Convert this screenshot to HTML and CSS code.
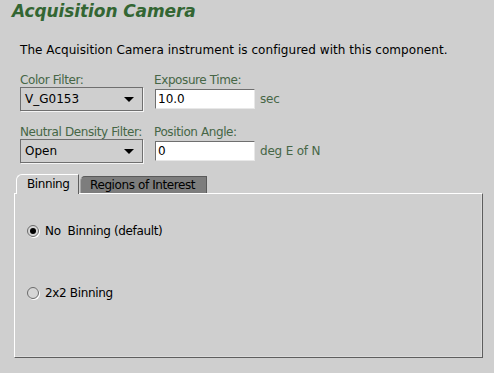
FILE: index.html
```html
<!DOCTYPE html>
<html>
<head>
<meta charset="utf-8">
<link rel="stylesheet" href="styles.css">
</head>
<body>
<h1 class="title">Acquisition Camera</h1>
<p class="desc">The Acquisition Camera instrument is configured with this component.</p>
<div class="form">
  <div class="label">Color Filter:</div>
  <div class="label span2">Exposure Time:</div>
  <div class="combo"><span>V_G0153</span><span class="arrow"></span></div>
  <div class="field">10.0</div>
  <div class="unit">sec</div>

  <div class="label row2">Neutral Density Filter:</div>
  <div class="label span2 row2">Position Angle:</div>
  <div class="combo"><span>Open</span><span class="arrow"></span></div>
  <div class="field">0</div>
  <div class="unit">deg E of N</div>
</div>
<div class="tabs">
  <div class="tab active">Binning</div>
  <div class="tab inactive">Regions of Interest</div>
</div>
<div class="panel">
  <div class="radio-row first"><span class="radio on"></span><span>No&nbsp; Binning (default)</span></div>
  <div class="radio-row second"><span class="radio"></span><span>2x2 Binning</span></div>
</div>
</body>
</html>
```
FILE: styles.css
```css
html, body {
  margin: 0;
  padding: 0;
  background: #cfcfcf;
  width: 494px;
  height: 373px;
  overflow: hidden;
  font-family: "DejaVu Sans", sans-serif;
  font-size: 12px;
  color: #000;
}
.title {
  margin: 0;
  padding: 0 0 0 12px;
  height: 22px;
  line-height: 22px;
  font-size: 17px;
  font-weight: bold;
  font-style: italic;
  color: #336633;
  letter-spacing: -0.1px;
}
.desc {
  margin: 21px 0 0 20px;
  line-height: 14px;
  letter-spacing: 0.05px;
}
.form {
  display: grid;
  grid-template-columns: 123px 100px auto;
  grid-template-rows: 14px 24px 28px 24px;
  column-gap: 12px;
  margin: 16px 0 0 20px;
  align-items: center;
}
.label {
  color: #466646;
  line-height: 14px;
  white-space: nowrap;
  letter-spacing: -0.4px;
}
.span2 { grid-column: span 2; margin-left: -1px; }
.form > .label.row2 { align-self: end; }
.combo {
  box-sizing: border-box;
  height: 24px;
  border: 1px solid #6f6f6f;
  box-shadow: 1px 1px 0 #f4f4f4;
  display: flex;
  align-items: center;
  justify-content: space-between;
  padding: 0 8px 0 4px;
  background: #cfcfcf;
}
.arrow {
  width: 0;
  height: 0;
  border-left: 5px solid transparent;
  border-right: 5px solid transparent;
  border-top: 5px solid #000;
}
.field {
  box-sizing: border-box;
  height: 20px;
  background: #fff;
  border-top: 1px solid #6f6f6f;
  border-left: 1px solid #6f6f6f;
  border-bottom: 1px solid #e8e8e8;
  border-right: 1px solid #e8e8e8;
  padding-left: 2px;
  line-height: 18px;
}
.unit {
  color: #466646;
  margin-left: -7px;
  letter-spacing: -0.2px;
}
.tabs {
  display: flex;
  align-items: flex-end;
  margin: 11px 0 0 16px;
  height: 19px;
}
.tab {
  box-sizing: border-box;
  white-space: nowrap;
  line-height: 16px;
  letter-spacing: -0.4px;
}
.tab.active {
  width: 63px;
  padding-left: 10px;
  padding-top: 1px;
  background: #cfcfcf;
  border-top: 1px solid #fff;
  border-left: 1px solid #fff;
  border-right: 1px solid #5e5e5e;
  border-top-left-radius: 6px;
  position: relative;
  z-index: 1;
  margin-bottom: -1px;
  height: 20px;
}
.tab.inactive {
  width: 127px;
  height: 17px;
  padding-left: 9px;
  background: #7d7d7d;
  border-top: 1px solid #5a5a5a;
  border-left: 1px solid #a8a8a8;
  border-right: 1px solid #5a5a5a;
  border-top-left-radius: 5px;
  margin-left: 1px;
}
.panel {
  box-sizing: border-box;
  width: 469px;
  height: 165px;
  margin-left: 14px;
  border-top: 1px solid #fff;
  border-left: 1px solid #fff;
  border-right: 1px solid #5e5e5e;
  border-bottom: 1px solid #5e5e5e;
  box-shadow: inset -1px -1px 0 #dcdcdc;
  padding: 30px 0 0 12px;
}
.radio-row {
  display: flex;
  align-items: center;
  height: 14px;
  gap: 6px;
  letter-spacing: -0.35px;
}
.radio-row.second { margin-top: 48px; }
.radio {
  box-sizing: border-box;
  width: 12px;
  height: 12px;
  border-radius: 50%;
  border: 1px solid #6a6a6a;
  background: #d6d6d6;
  box-shadow: 1px 1px 0 #fff;
  position: relative;
  flex: none;
}
.radio.on::after {
  content: "";
  position: absolute;
  left: 2px;
  top: 2px;
  width: 6px;
  height: 6px;
  border-radius: 50%;
  background: #000;
}
```
